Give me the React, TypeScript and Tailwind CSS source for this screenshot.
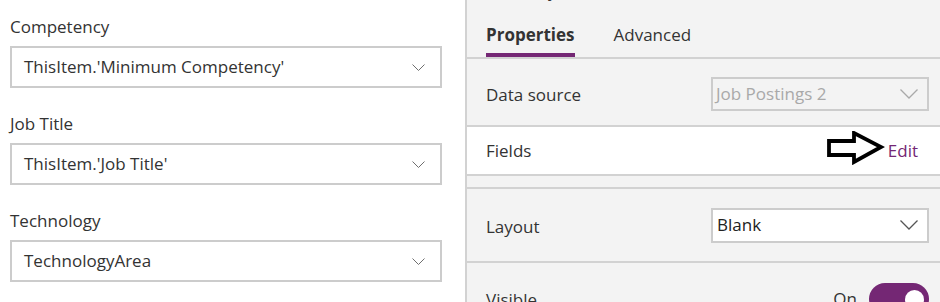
import { ReactNode } from "react";

const font = { fontFamily: '"Open Sans", "Noto Sans", sans-serif' };

const SmallChevron = () => (
    <svg width="13" height="7" viewBox="0 0 13 7" className="shrink-0">
        <polyline points="0.5,0.5 6.5,6.5 12.5,0.5" fill="none" stroke="#6e6e6e" strokeWidth="1" />
    </svg>
);

const BigChevron = ({ color }: { color: string }) => (
    <svg width="18" height="10" viewBox="0 0 18 10" className="shrink-0">
        <polyline points="0.5,0.5 9,9 17.5,0.5" fill="none" stroke={color} strokeWidth="1.3" />
    </svg>
);

const Field = ({ label, value }: { label: string; value: string }) => (
    <div className="flex flex-col">
        <div className="h-[24px] leading-[24px] text-[17px] text-[#333333]">{label}</div>
        <div className="mt-[7px] h-[42px] border-2 border-[#cccccc] flex items-center justify-between pl-[12px] pr-[15px] text-[17px] text-[#333333]">
            <span>{value}</span>
            <SmallChevron />
        </div>
    </div>
);

const Row = ({ children, className }: { children: ReactNode; className: string }) => (
    <div className={"flex items-center justify-between pl-[19px] pr-[11px] border-b-2 border-[#d2d2d2] " + className}>
        {children}
    </div>
);

const EditArrow = () => (
    <svg width="58" height="34" viewBox="0 0 58 34" className="shrink-0">
        <polygon
            points="2,10 27,10 27,2 54,16 27,31 27,24 2,24"
            fill="white"
            stroke="black"
            strokeWidth="3.8"
            strokeLinejoin="miter"
        />
    </svg>
);

export default function App() {
    return (
        <div className="w-[940px] h-[302px] flex overflow-hidden bg-white" style={font}>
            <div className="w-[465px] shrink-0 pt-[15px] pl-[10px] pr-[23px] flex flex-col gap-[24px]">
                <Field label="Competency" value="ThisItem.'Minimum Competency'" />
                <Field label="Job Title" value="ThisItem.'Job Title'" />
                <Field label="Technology" value="TechnologyArea" />
            </div>

            <div className="flex-1 bg-[#f3f3f3] border-l-2 border-[#d2d2d2] flex flex-col">
                <div className="h-[59px] shrink-0 flex items-end gap-[39px] pl-[19px] border-b-2 border-[#d2d2d2] relative">
                    <div className="absolute left-[34px] top-[-21px] text-[17px] leading-[24px] text-[#333333]">Gallery</div>
                    <div className="flex flex-col">
                        <span className="leading-[24px] text-[17px] font-bold text-[#333333]">Properties</span>
                        <div className="mt-[6px] h-[4px] bg-[#742774]" />
                    </div>
                    <div className="flex flex-col">
                        <span className="leading-[24px] text-[17px] text-[#333333]">Advanced</span>
                        <div className="mt-[6px] h-[4px]" />
                    </div>
                </div>

                <Row className="h-[68px] shrink-0 pt-[4px]">
                    <span className="text-[17px] text-[#333333] mt-[2px]">Data source</span>
                    <div className="w-[218px] h-[34px] border-2 border-[#cccccc] flex items-center justify-between pl-[3px] pr-[9px]">
                        <span className="text-[17px] text-[#a9a9a9]">Job Postings 2</span>
                        <BigChevron color="#a9a9a9" />
                    </div>
                </Row>

                <Row className="h-[49px] shrink-0 bg-white !pr-[22px]">
                    <span className="text-[17px] text-[#333333]">Fields</span>
                    <div className="flex items-center gap-[3px]">
                        <div className="mt-[-6px]">
                            <EditArrow />
                        </div>
                        <span className="text-[17px] text-[#742774]">Edit</span>
                    </div>
                </Row>

                <div className="h-[13px] shrink-0 border-b-2 border-[#d2d2d2]" />

                <Row className="h-[74px] shrink-0">
                    <span className="text-[17px] text-[#333333] mt-[4px]">Layout</span>
                    <div className="w-[218px] h-[35px] border-2 border-[#cccccc] bg-white flex items-center justify-between pl-[4px] pr-[9px]">
                        <span className="text-[17px] text-[#222222]">Blank</span>
                        <BigChevron color="#555555" />
                    </div>
                </Row>

                <div className="h-[72px] shrink-0 flex items-center justify-between pl-[19px] pr-[11px]">
                    <span className="text-[17px] text-[#333333] mt-[2px]">Visible</span>
                    <div className="flex items-center gap-[12px]">
                        <span className="text-[17px] text-[#333333]">On</span>
                        <div className="w-[60px] h-[32px] rounded-full bg-[#742774] flex items-center justify-end pr-[5px]">
                            <div className="w-[19px] h-[19px] rounded-full bg-white" />
                        </div>
                    </div>
                </div>
            </div>
        </div>
    );
}
